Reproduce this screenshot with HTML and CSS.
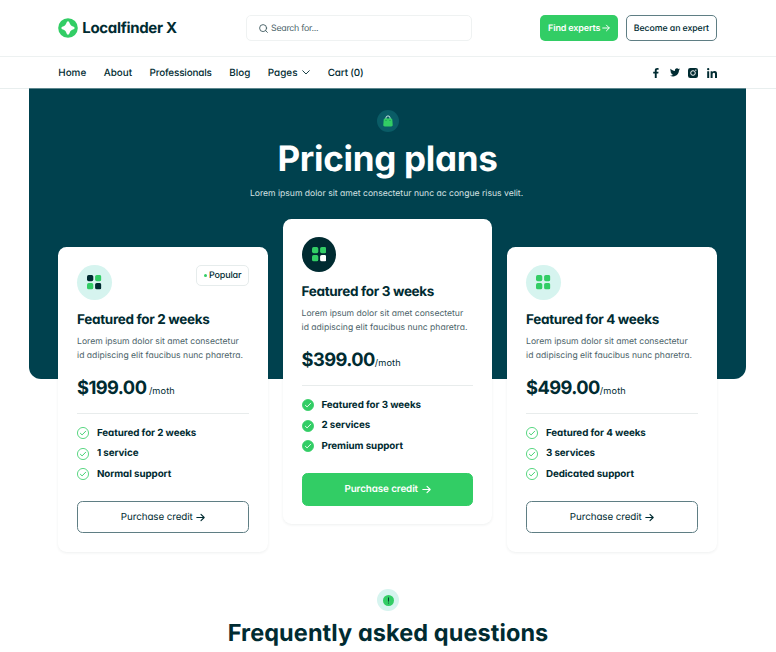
FILE: index.html
```html
<!DOCTYPE html>
<html lang="en">
<head>
<meta charset="utf-8">
<title>Localfinder X – Pricing plans</title>
<link rel="stylesheet" href="styles.css">
</head>
<body>
<svg class="defs" width="0" height="0" aria-hidden="true">
  <symbol id="arrow" viewBox="0 0 9 9"><path d="M.8 4.500h7.300M5 1.300l3.200 3.200L5 7.700" fill="none" stroke="currentColor" stroke-width="1.1" stroke-linecap="round" stroke-linejoin="round"/></symbol>
  <symbol id="check" viewBox="0 0 12 12"><circle class="disc" cx="6" cy="6" r="5.550"/><path class="tick" d="M3.400 6.300l1.700 1.600 3.600-3.700"/></symbol>
  <symbol id="tiles" viewBox="0 0 14.400 14.400"><rect class="t1" width="6.300" height="6.300" rx="1.700"/><rect x="8.100" width="6.300" height="6.300" rx="1.700"/><rect y="8.100" width="6.300" height="6.300" rx="1.700"/><rect class="t4" x="8.100" y="8.100" width="6.300" height="6.300" rx="1.700"/></symbol>
</svg>

<header class="topbar">
  <div class="wrap topbar-row">
    <a class="logo">
      <svg width="20" height="20" viewBox="0 0 20 20"><circle cx="10" cy="10" r="9.800" fill="#32cd65"/><path d="M10 3.300c.9 0 1.300 1.200 1.900 2.500.6 1.300 1.200 1.900 2.400 2.400 1.300.5 2.400.9 2.400 1.800s-1.100 1.300-2.400 1.800c-1.200.5-1.800 1.100-2.400 2.400-.6 1.300-1 2.500-1.900 2.500s-1.300-1.200-1.900-2.500c-.6-1.300-1.200-1.900-2.400-2.400-1.300-.5-2.400-.9-2.400-1.800s1.100-1.300 2.400-1.800c1.200-.5 1.800-1.100 2.400-2.400.6-1.300 1-2.500 1.900-2.500z" fill="#fff"/></svg>
      <span class="logo-text">Localfinder X</span>
    </a>
    <div class="search">
      <svg width="9" height="9" viewBox="0 0 9 9" fill="none" stroke="#3f5a60" stroke-width=".9" stroke-linecap="round"><circle cx="4.100" cy="4.100" r="3.500"/><path d="M6.700 6.700l1.700 1.700"/></svg>
      <span>Search for...</span>
    </div>
    <div class="actions">
      <a class="btn-small primary"><span>Find experts</span><svg width="8" height="8"><use href="#arrow"/></svg></a>
      <a class="btn-small outline"><span>Become an expert</span></a>
    </div>
  </div>
</header>

<nav class="navbar">
  <div class="wrap nav-row">
    <div class="links">
      <a>Home</a><a>About</a><a class="tight">Professionals</a><a>Blog</a>
      <a class="pages">Pages<svg width="8" height="5" viewBox="0 0 8 5" fill="none" stroke="currentColor" stroke-width=".9" stroke-linecap="round" stroke-linejoin="round"><path d="M.7.7L4 4 7.300.7"/></svg></a>
      <a class="tight">Cart (0)</a>
    </div>
    <div class="social">
      <svg class="fb" width="6" height="10" viewBox="0 0 6 10"><path d="M1.800 10V5.600H.2V3.800h1.600V2.500C1.800.9 2.700.1 4.200.1c.7 0 1.300.1 1.400.1v1.600h-1c-.8 0-.9.4-.9.9v1.100h1.800l-.2 1.800H3.700V10z"/></svg>
      <svg width="10" height="9" viewBox="0 0 24 20"><path d="M24 2.400c-.9.400-1.800.7-2.800.8 1-.6 1.800-1.600 2.200-2.700-1 .6-2 1-3.100 1.200A4.900 4.900 0 0 0 11.900 6.200C7.800 6 4.200 4 1.700.9a4.900 4.900 0 0 0 1.500 6.600c-.8 0-1.600-.2-2.200-.6v.1c0 2.400 1.700 4.400 3.900 4.800-.7.2-1.500.2-2.200.1.600 2 2.400 3.400 4.600 3.400A9.900 9.900 0 0 1 0 17.300 13.900 13.900 0 0 0 7.500 19.500c9.100 0 14.300-7.700 14-14.600 1-.7 1.800-1.600 2.500-2.500z"/></svg>
      <svg width="10" height="10" viewBox="0 0 10 10"><rect width="10" height="10" rx="2.200"/><circle cx="5" cy="5" r="2.300" fill="none" stroke="#fff" stroke-width=".95"/><circle cx="7.800" cy="2.200" r=".65" fill="#fff"/></svg>
      <svg width="10" height="10" viewBox="0 0 10 10"><circle cx="1.200" cy="1.200" r="1.150"/><path d="M.2 3.200h2V10h-2zM3.600 3.200h1.900v.9c.4-.7 1.100-1.100 2-1.100C9.500 3 10 4.300 10 6v4H8V6.400c0-.9-.1-1.700-1.100-1.700S5.600 5.500 5.600 6.400V10h-2z"/></svg>
    </div>
  </div>
</nav>

<main>
  <section class="hero">
    <div class="badge dark">
      <svg width="10" height="12" viewBox="0 0 10 12"><path d="M2.900 4V3a2.100 2.100 0 0 1 4.200 0v1" fill="none" stroke="#d6f4ef" stroke-width=".9"/><path d="M2 3.400h6c.8 0 1.200.4 1.300 1.200l.4 5.200c.1 1-.5 1.700-1.500 1.700H1.800c-1 0-1.600-.7-1.500-1.700l.4-5.200C.8 3.800 1.200 3.400 2 3.400z" fill="#32cd65"/><path d="M2.500 5.500h1M6.500 5.500h1" stroke="#087a4e" stroke-width=".7"/></svg>
    </div>
    <h1>Pricing plans</h1>
    <p class="lead">Lorem ipsum dolor sit amet consectetur nunc ac congue risus velit.</p>

    <div class="plans">
      <article class="card duo">
        <div class="card-top">
          <div class="plan-icon"><svg width="14.4" height="14.4"><use href="#tiles"/></svg></div>
          <span class="tag"><b></b>Popular</span>
        </div>
        <h2>Featured for 2 weeks</h2>
        <p class="desc">Lorem ipsum dolor sit amet consectetur<br>id adipiscing elit faucibus nunc pharetra.</p>
        <p class="price"><strong class="p1">$199.00</strong><span>/moth</span></p>
        <ul>
          <li><svg width="12" height="12"><use href="#check"/></svg>Featured for 2 weeks</li>
          <li><svg width="12" height="12"><use href="#check"/></svg>1 service</li>
          <li><svg width="12" height="12"><use href="#check"/></svg>Normal support</li>
        </ul>
        <a class="buy">Purchase credit<svg width="9" height="9"><use href="#arrow"/></svg></a>
      </article>

      <article class="card featured">
        <div class="card-top">
          <div class="plan-icon"><svg width="14.4" height="14.4"><use href="#tiles"/></svg></div>
        </div>
        <h2>Featured for 3 weeks</h2>
        <p class="desc">Lorem ipsum dolor sit amet consectetur<br>id adipiscing elit faucibus nunc pharetra.</p>
        <p class="price"><strong>$399.00</strong><span>/moth</span></p>
        <ul>
          <li><svg width="12" height="12"><use href="#check"/></svg>Featured for 3 weeks</li>
          <li><svg width="12" height="12"><use href="#check"/></svg>2 services</li>
          <li><svg width="12" height="12"><use href="#check"/></svg>Premium support</li>
        </ul>
        <a class="buy">Purchase credit<svg width="9" height="9"><use href="#arrow"/></svg></a>
      </article>

      <article class="card">
        <div class="card-top">
          <div class="plan-icon"><svg width="14.4" height="14.4"><use href="#tiles"/></svg></div>
        </div>
        <h2>Featured for 4 weeks</h2>
        <p class="desc">Lorem ipsum dolor sit amet consectetur<br>id adipiscing elit faucibus nunc pharetra.</p>
        <p class="price"><strong>$499.00</strong><span>/moth</span></p>
        <ul>
          <li><svg width="12" height="12"><use href="#check"/></svg>Featured for 4 weeks</li>
          <li><svg width="12" height="12"><use href="#check"/></svg>3 services</li>
          <li><svg width="12" height="12"><use href="#check"/></svg>Dedicated support</li>
        </ul>
        <a class="buy">Purchase credit<svg width="9" height="9"><use href="#arrow"/></svg></a>
      </article>
    </div>
  </section>

  <section class="faq">
    <div class="badge">
      <svg width="11" height="11" viewBox="0 0 11 11"><circle cx="5.500" cy="5.500" r="5.500" fill="#32cd65"/><path d="M5.500 2.900v3.300" stroke="#002b31" stroke-width=".9" stroke-linecap="round"/><circle cx="5.500" cy="7.900" r=".5" fill="#002b31"/></svg>
    </div>
    <h2 class="faq-title">Frequently asked questions</h2>
  </section>
</main>
</body>
</html>
```
FILE: styles.css
```css
* { box-sizing: border-box; margin: 0; padding: 0; }

body {
  height: 652px;
  overflow: hidden;
  background: #fff;
  color: #002b31;
  font-family: Inter, "Liberation Sans", sans-serif;
  font-feature-settings: "cv11" 1;
  font-size: 10px;
  text-rendering: geometricPrecision;
}

svg { display: block; flex: none; }
.defs { position: absolute; }
.wrap { width: 658.4px; margin: 0 0 0 58.3px; }

.topbar { height: 57px; border-bottom: 1px solid #edf1f1; }
.topbar-row { height: 56px; display: flex; align-items: center; }
.logo { width: 187.3px; display: flex; align-items: center; gap: 4px; }
.logo-text { font-size: 15px; font-weight: 700; line-height: 20px; letter-spacing: -0.33px; }
.search {
  width: 226px; height: 26px;
  display: flex; align-items: center; gap: 3.5px;
  padding-left: 12px;
  border: 1px solid #eff2f2; border-radius: 5px;
  color: #4a6268; font-size: 8.8px; letter-spacing: -0.27px;
}
.actions { margin-left: auto; display: flex; gap: 8px; }
.btn-small {
  height: 26px;
  display: flex; align-items: center; justify-content: center; gap: 2px;
  border-radius: 5px; font-size: 9px; white-space: nowrap;
}
.btn-small.primary { width: 78px; background: #32cd65; color: #fff; font-weight: 600; letter-spacing: -0.15px; }
.btn-small.outline { width: 90.500px; border: 1px solid #5f7e84; font-size: 8.800px; font-weight: 450; letter-spacing: -0.1px; }

.navbar { height: 32px; border-bottom: 1px solid #e8eeee; }
.nav-row { height: 31px; display: flex; align-items: center; justify-content: space-between; }
.links { display: flex; gap: 17.500px; font-size: 9.900px; font-weight: 450; white-space: nowrap; }
.links .tight { letter-spacing: -0.15px; }
.pages { display: flex; align-items: center; gap: 4.800px; }
.social { display: flex; align-items: center; gap: 8.500px; fill: #002b31; }
.fb { margin-right: 2px; }

.hero {
  width: 717px; height: 291px;
  margin: -1px 0 0 29px; padding-top: 22px;
  background: linear-gradient(#5d878e 1px, #00414e 1px);
  border-radius: 0 0 12px 12px;
  text-align: center;
}
.badge {
  width: 22px; height: 22px; margin: 0 auto;
  display: flex; align-items: center; justify-content: center;
  border-radius: 50%; background: #d6f4ef;
}
.badge.dark { background: #0a5c66; }
h1 { margin-top: 7px; color: #fff; font-size: 35px; line-height: 40px; font-weight: 700; letter-spacing: -0.3px; }
.lead { margin: 9px 2px 0 0; color: #d5e2e3; font-size: 8.600px; line-height: 12px; }

.plans {
  width: 658.4px; margin: 20px 0 0 29.3px;
  display: grid; grid-template-columns: repeat(3, minmax(0, 1fr)); gap: 15.1px;
  text-align: left;
}
.card {
  --disc: none; --tick: #32cd65; --t1: #32cd65; --t4: #32cd65;
  height: 305px; margin-top: 27.300px; padding: 17.700px 18.800px;
  background: #fff; border-radius: 8.500px;
  box-shadow: 0 1px 3px rgba(0, 43, 49, .07);
}
.card.duo { --t1: #002b31; --t4: #002b31; }
.card.featured { --disc: #32cd65; --tick: #fff; --t4: #fff; margin-top: -0.7px; }
.card-top { display: flex; justify-content: space-between; align-items: flex-start; }
.plan-icon {
  width: 34.500px; height: 35px;
  display: flex; align-items: center; justify-content: center;
  border-radius: 50%; background: #d6f4ef; fill: #32cd65;
}
.t1 { fill: var(--t1); }
.t4 { fill: var(--t4); }
.featured .plan-icon { background: #002b31; }
.tag {
  width: 53px; height: 21px;
  display: flex; align-items: center; justify-content: center; gap: 2.500px;
  border: 1px solid #e6ecec; border-radius: 5px;
  font-size: 9px; font-weight: 450; letter-spacing: -0.17px;
}
.tag b { width: 3px; height: 3px; border-radius: 50%; background: #32cd65; }
.card h2 { margin-top: 11px; font-size: 13.500px; line-height: 18px; font-weight: 650; letter-spacing: -0.33px; white-space: nowrap; }
.desc { margin-top: 6px; color: #4a6268; font-size: 8.600px; line-height: 14px; white-space: nowrap; }
.price { margin-top: 12px; height: 27px; line-height: 26px; white-space: nowrap; }
.price strong { font-size: 18.300px; font-weight: 700; letter-spacing: -0.57px; }
.price .p1 { margin-right: 2.500px; }
.price span { font-size: 9.200px; letter-spacing: .15px; }
ul { list-style: none; margin-top: 11px; padding-top: 9px; border-top: 1px solid #e8ecec; }
li { display: flex; align-items: center; gap: 7.800px; height: 20.500px; font-size: 9.800px; font-weight: 650; letter-spacing: -0.07px; white-space: nowrap; }
.disc { fill: var(--disc); stroke: #32cd65; stroke-width: .8; }
.tick { fill: none; stroke: var(--tick); stroke-width: .9; stroke-linecap: round; stroke-linejoin: round; }
.buy {
  margin-top: 16.500px; height: 32.500px;
  display: flex; align-items: center; justify-content: center; gap: 3.500px;
  border: 1px solid #5f7e84; border-radius: 5.500px;
  font-size: 9.800px; letter-spacing: -0.08px;
}
.featured .buy { border-color: #32cd65; background: #32cd65; color: #fff; font-weight: 600; }

.faq { margin-top: 210px; text-align: center; }
.faq-title { margin-top: 7px; font-size: 23.500px; line-height: 30px; font-weight: 700; letter-spacing: .08px; }
```
